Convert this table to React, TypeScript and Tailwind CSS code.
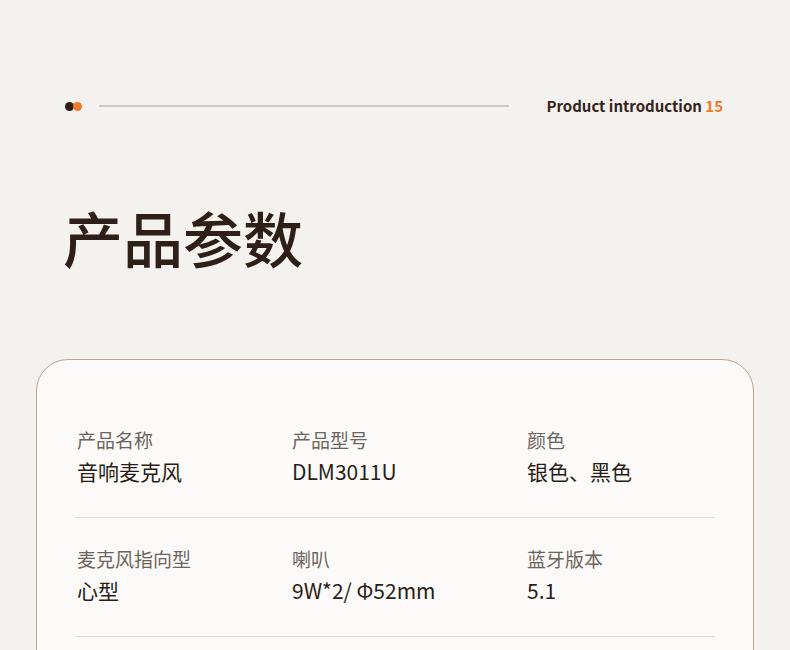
import React from 'react';

const rows = [
  [
    { label: '产品名称', value: '音响麦克风' },
    { label: '产品型号', value: 'DLM3011U' },
    { label: '颜色', value: '银色、黑色' },
  ],
  [
    { label: '麦克风指向型', value: '心型' },
    { label: '喇叭', value: '9W*2/ Φ52mm' },
    { label: '蓝牙版本', value: '5.1' },
  ],
];

export default function App() {
  return (
    <div
      className="h-[650px] w-[790px] overflow-hidden bg-[#f4f2ef]"
      style={{ fontFamily: '"Noto Sans CJK SC", "Noto Sans", sans-serif' }}
    >
      {/* Header */}
      <div className="flex h-[205px] flex-col pl-[65px] pr-[67px] pt-[97px]">
        <div className="flex h-[18px] items-center">
          <div className="flex items-center">
            <span className="h-[9px] w-[9px] rounded-full bg-[#2e1e14]" />
            <span className="-ml-[1.5px] h-[9px] w-[9px] rounded-full bg-[#ee7a26]" />
          </div>
          <div className="ml-[17px] h-[2px] w-[410px] bg-[#cdc8c1]" />
          <div className="ml-auto text-[15px] font-semibold text-[#34241a]">
            Product introduction <span className="text-[#ee7a26]">15</span>
          </div>
        </div>
      </div>

      {/* Title */}
      <h1 className="pl-[63px] text-[60px] font-medium leading-[64px] text-[#2e2018]">产品参数</h1>

      {/* Card */}
      <div className="mx-[36px] mt-[90px] h-[400px] rounded-[32px] border border-[#bfa28e] bg-[#fbfaf8] px-[38px] pt-[39px]">
        {rows.map((row, i) => (
          <div key={i} className="flex border-b border-[#dedad5] pb-[31px] pl-[2px] pt-[27px]">
            {row.map((cell, j) => (
              <div key={j} className={j === 0 ? 'w-[215px]' : j === 1 ? 'w-[235px]' : 'flex-1'}>
                <div className="text-[19px] leading-[27px] text-[#6d645e]">{cell.label}</div>
                <div className="mt-[4px] text-[21px] leading-[29px] text-[#2a1d16]">{cell.value}</div>
              </div>
            ))}
          </div>
        ))}
      </div>
    </div>
  );
}
